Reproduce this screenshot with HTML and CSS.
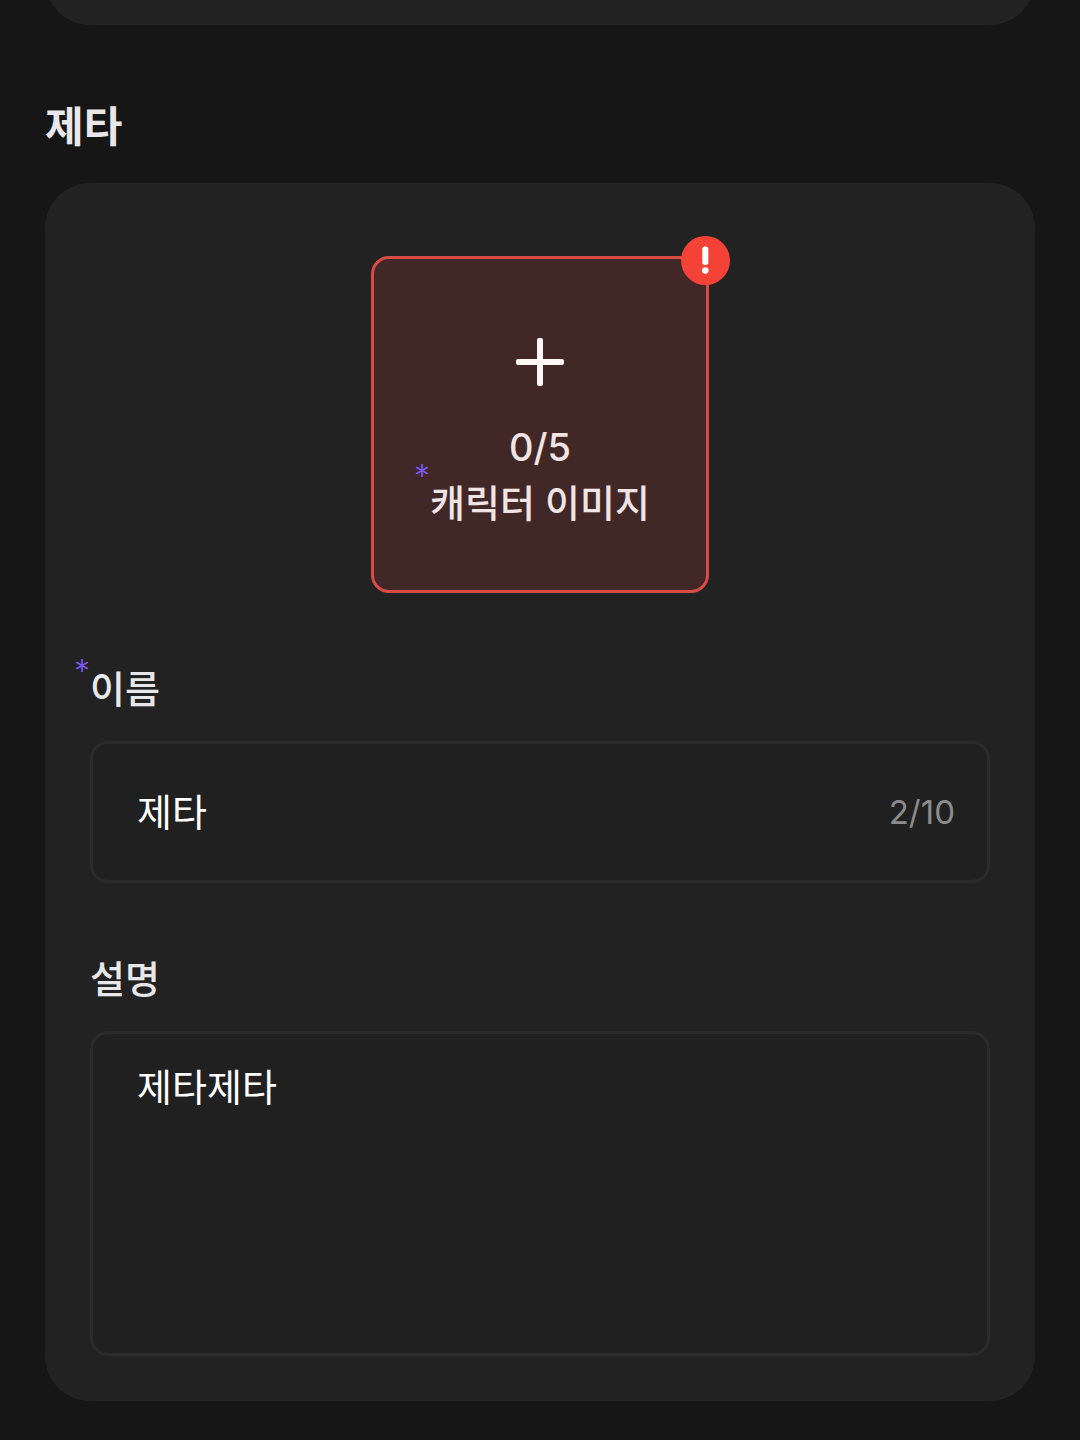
FILE: index.html
```html
<!DOCTYPE html>
<html lang="ko">
  <head>
    <meta charset="UTF-8" />
    <meta name="viewport" content="width=device-width, initial-scale=1.0" />
    <title>제타</title>
    <link rel="stylesheet" href="styles.css">
  </head>
  <body>
    <!-- 이전 카드의 끝부분 -->
    <div class="card card-previous"></div>

    <!-- 캐릭터 -->
    <main class="section">
      <h1 class="section-title">제타</h1>

      <form class="card">
        <!-- 이미지 업로드 -->
        <button type="button" class="upload">
          <svg class="upload-icon" viewBox="0 0 48 48" aria-hidden="true">
            <rect x="0" y="21" width="48" height="6" rx="2" />
            <rect x="21" y="0" width="6" height="48" rx="2" />
          </svg>
          <span class="upload-count">0/5</span>
          <span class="label-text required">캐릭터 이미지</span>
          <svg class="upload-error" viewBox="0 0 49 49" aria-hidden="true">
            <circle class="error-circle" cx="24.5" cy="24.5" r="24.5" />
            <rect x="21.3" y="10.5" width="6" height="18.5" rx="2.7" />
            <circle cx="24.3" cy="34.5" r="3.3" />
          </svg>
        </button>

        <!-- 이름 -->
        <div class="field">
          <label class="label-text required" for="name">이름</label>
          <div class="input-box">
            <input type="text" id="name" class="input" value="제타" maxlength="10" />
            <span class="input-count">2/10</span>
          </div>
        </div>

        <!-- 설명 -->
        <div class="field">
          <label class="label-text" for="description">설명</label>
          <textarea id="description" class="textarea">제타제타</textarea>
        </div>
      </form>
    </main>
  </body>
</html>
```

FILE: styles.css
```css
/* 전체 화면 설정 */
* {
  box-sizing: border-box;
}

body {
  margin: 0;
  padding: 0 45px 39px;
  background-color: #161616;
  font-family: Inter, "Noto Sans CJK KR", sans-serif;
  font-size: 38px;
  color: #e8e8ea;
}

/* 카드 */
.card {
  padding: 73px 45px 45px;
  background-color: #222222;
  border-radius: 45px;
}

.card-previous {
  height: 90px;
  margin-top: -65px;
  padding: 0;
}

/* 제목 */
.section-title {
  margin: 72px 0 26px;
  font-size: 42px;
  font-weight: 700;
  line-height: 60px;
}

/* 라벨 */
.label-text {
  position: relative;
  font-weight: 500;
  line-height: 56px;
}

.required::before {
  content: "*";
  position: absolute;
  top: -5px;
  left: -16px;
  font-size: 32px;
  font-weight: 300;
  line-height: 32px;
  color: #7c5cf0;
}

/* 이미지 업로드 */
.upload {
  position: relative;
  display: flex;
  flex-direction: column;
  align-items: center;
  justify-content: center;
  width: 338px;
  height: 337px;
  margin: 0 auto;
  padding: 20px 0 0;
  background-color: #422727;
  border: 3px solid #d84c45;
  border-radius: 18px;
  font: inherit;
  color: #f0e4e4;
  cursor: pointer;
}

.upload .required::before {
  top: -14px;
}

.upload-icon {
  width: 48px;
  height: 48px;
  margin-bottom: 33px;
  fill: #fffaf5;
}

.upload-count {
  font-weight: 500;
  line-height: 56px;
}

.upload-error {
  position: absolute;
  top: -23px;
  right: -24px;
  width: 49px;
  height: 49px;
  fill: #ffffff;
}

.error-circle {
  fill: #f44336;
}

/* 입력 필드 */
.field {
  display: flex;
  flex-direction: column;
  align-items: flex-start;
  gap: 24px;
  margin-top: 68px;
}

.input-box,
.textarea {
  width: 100%;
  background-color: #202020;
  border: 3px solid #2b2b2b;
  border-radius: 18px;
}

.input-box {
  display: flex;
  align-items: center;
  height: 142px;
  padding: 0 32px 0 44px;
}

.input {
  flex: 1;
  min-width: 0;
  padding: 0;
  background: none;
  border: none;
  outline: none;
  font: inherit;
  line-height: 56px;
  color: #ffffff;
}

.input-count {
  font-size: 33px;
  color: #8c8c8c;
}

.textarea {
  display: block;
  height: 325px;
  padding: 25px 44px;
  outline: none;
  resize: none;
  font: inherit;
  line-height: 56px;
  color: #ffffff;
}
```
